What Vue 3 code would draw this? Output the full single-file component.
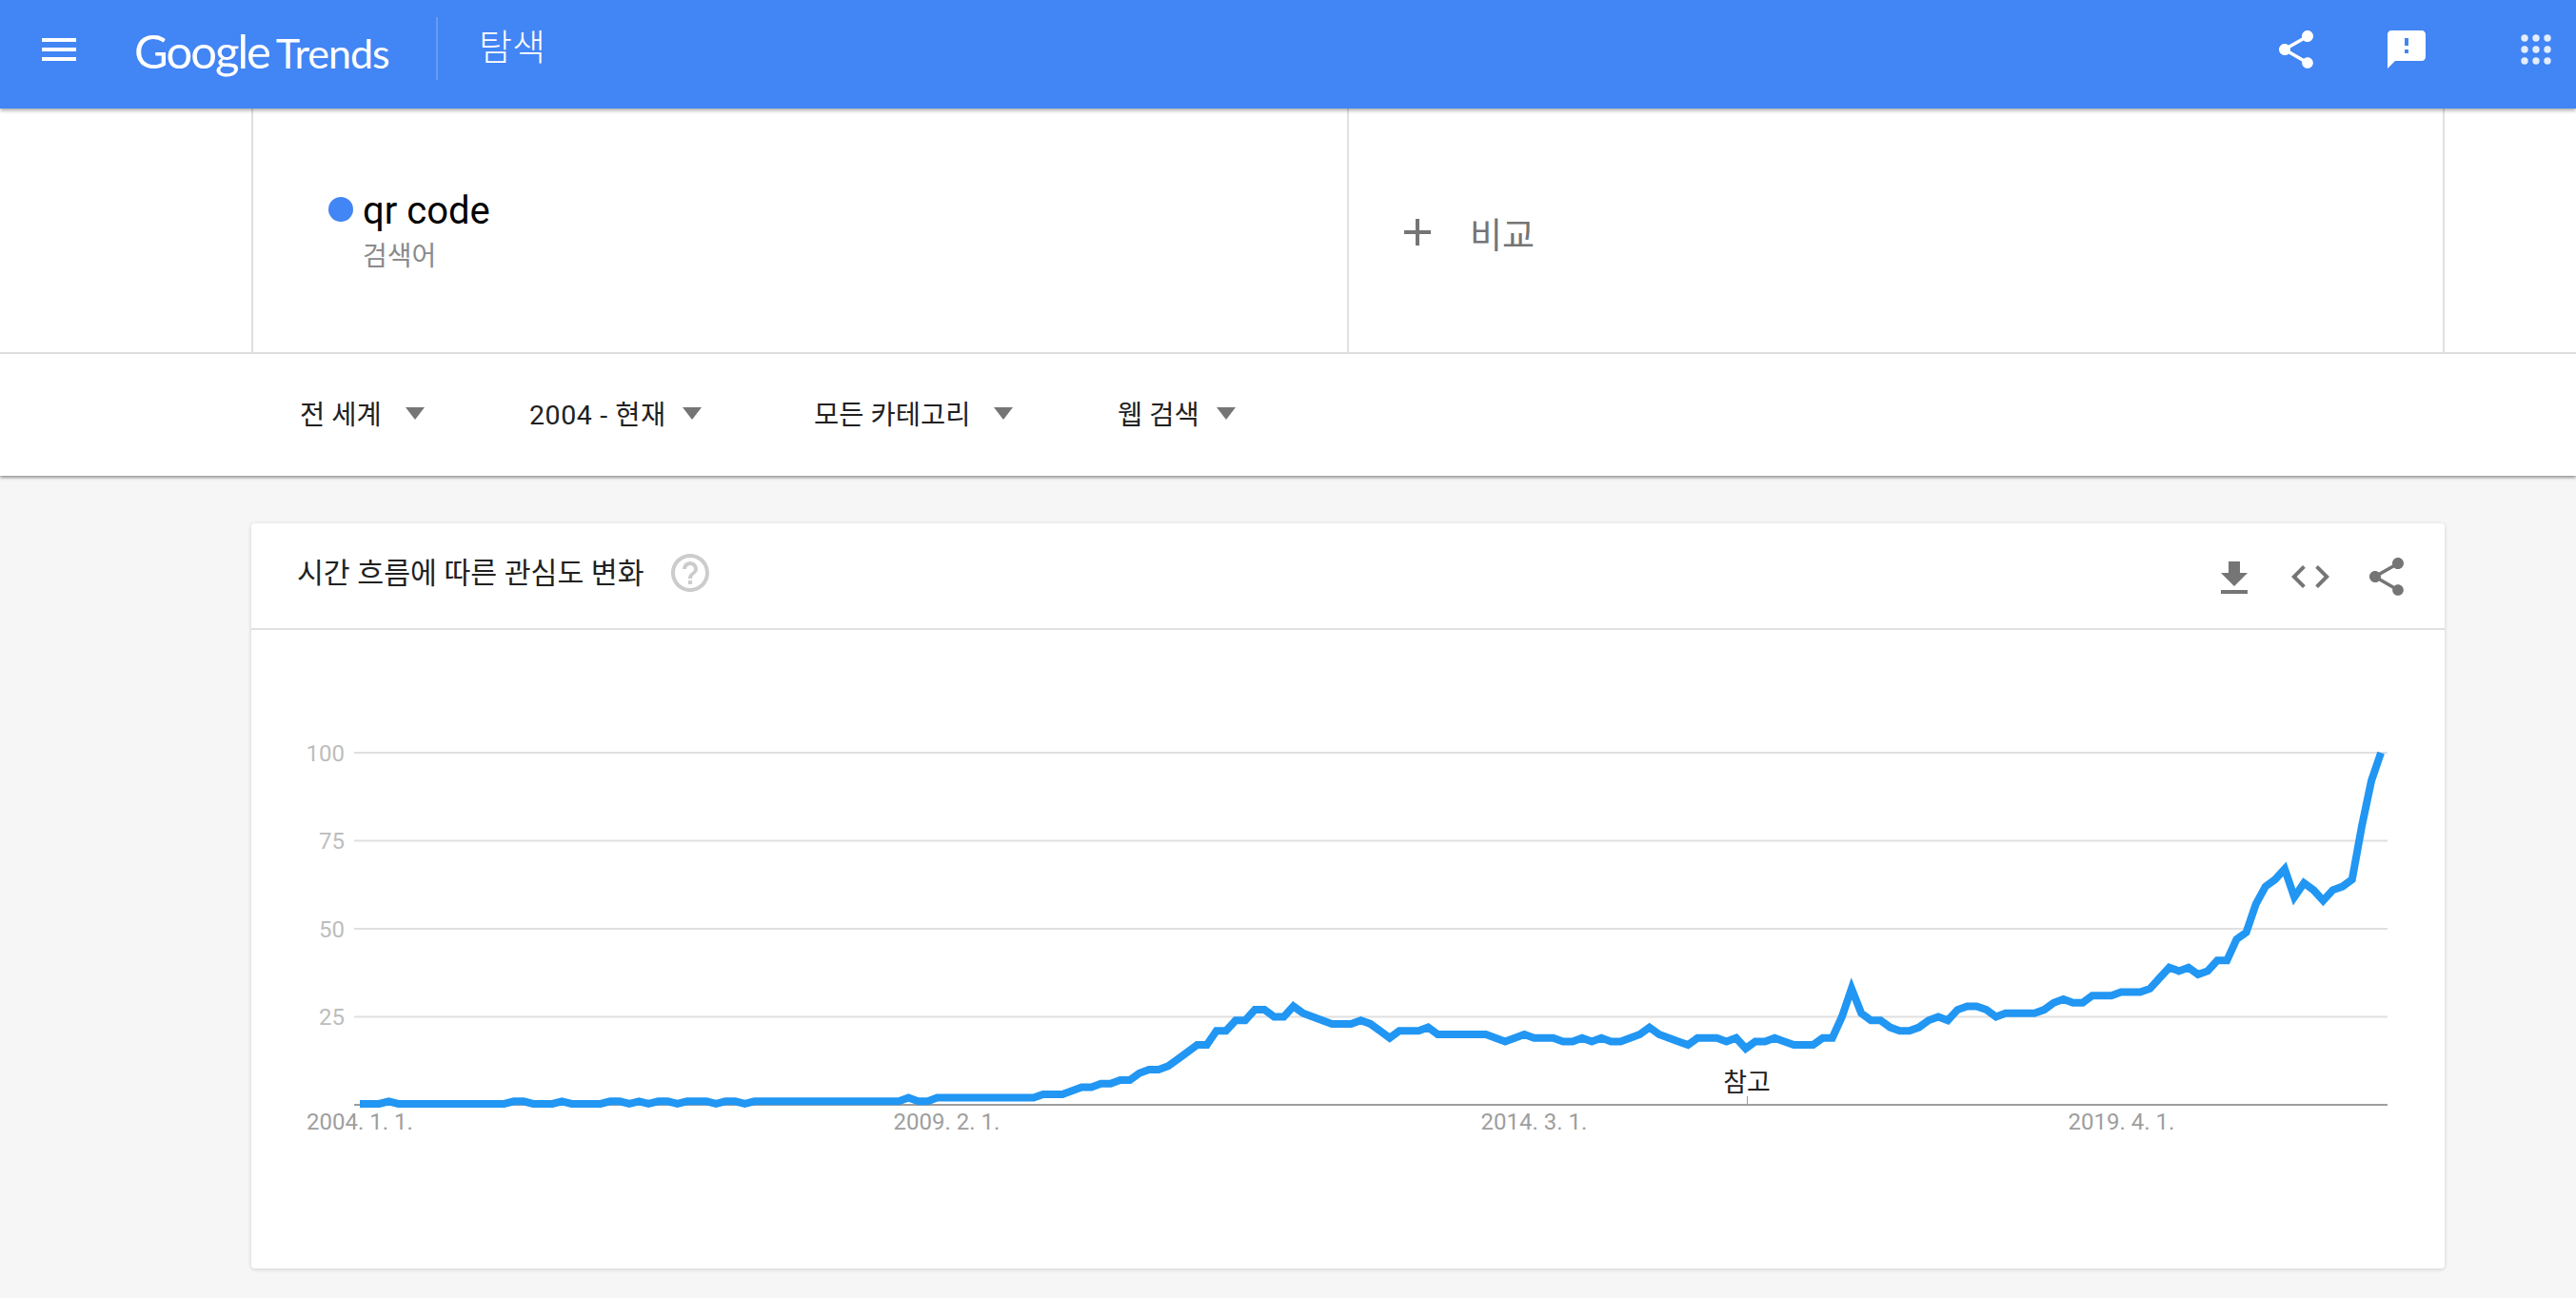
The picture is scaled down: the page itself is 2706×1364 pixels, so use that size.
<script setup>
const filters = ['전 세계', '2004 - 현재', '모든 카테고리', '웹 검색']

const values = [
  0, 0, 0, 1, 0, 0, 0, 0, 0, 0, 0, 0, 0, 0, 0, 0, 1, 1, 0, 0, 0, 1, 0, 0, 0, 0, 1, 1, 0, 1,
  0, 1, 1, 0, 1, 1, 1, 0, 1, 1, 0, 1, 1, 1, 1, 1, 1, 1, 1, 1, 1, 1, 1, 1, 1, 1, 1, 2, 1, 1,
  2, 2, 2, 2, 2, 2, 2, 2, 2, 2, 2, 3, 3, 3, 4, 5, 5, 6, 6, 7, 7, 9, 10, 10, 11, 13, 15, 17, 17, 21,
  21, 24, 24, 27, 27, 25, 25, 28, 26, 25, 24, 23, 23, 23, 24, 23, 21, 19, 21, 21, 21, 22, 20, 20, 20, 20, 20, 20, 19, 18,
  19, 20, 19, 19, 19, 18, 18, 19, 18, 19, 18, 18, 19, 20, 22, 20, 19, 18, 17, 19, 19, 19, 18, 19, 16, 18, 18, 19, 18, 17,
  17, 17, 19, 19, 25, 33, 26, 24, 24, 22, 21, 21, 22, 24, 25, 24, 27, 28, 28, 27, 25, 26, 26, 26, 26, 27, 29, 30, 29, 29,
  31, 31, 31, 32, 32, 32, 33, 36, 39, 38, 39, 37, 38, 41, 41, 47, 49, 57, 62, 64, 67, 59, 63, 61, 58, 61, 62, 64, 79, 92,
  100
]

const baseY = 1161
const toY = (v) => baseY - 3.7 * v
const points = values
  .map((v, i) => `${(378 + i * 10.11).toFixed(1)},${toY(Math.max(v, 0.3)).toFixed(1)}`)
  .join(' ')

const gridLines = [100, 75, 50, 25]
const dates = [
  { label: '2004. 1. 1.', x: 378 },
  { label: '2009. 2. 1.', x: 994.5 },
  { label: '2014. 3. 1.', x: 1611.5 },
  { label: '2019. 4. 1.', x: 2228.5 }
]

const sharePath = 'M18 16.08c-.76 0-1.44.3-1.96.77L8.91 12.7c.05-.23.09-.46.09-.7s-.04-.47-.09-.7l7.05-4.11c.54.5 1.25.81 2.04.81 1.66 0 3-1.34 3-3s-1.34-3-3-3-3 1.34-3 3c0 .24.04.47.09.7L8.04 9.81C7.5 9.31 6.79 9 6 9c-1.66 0-3 1.34-3 3s1.34 3 3 3c.79 0 1.5-.31 2.04-.81l7.12 4.16c-.05.21-.08.43-.08.65 0 1.61 1.31 2.92 2.92 2.92 1.61 0 2.92-1.31 2.92-2.92s-1.31-2.92-2.92-2.92z'
</script>

<template>
  <div class="page">
    <header class="topbar">
      <svg class="icon menu" viewBox="0 0 24 24"><path d="M3 18h18v-2H3v2zm0-5h18v-2H3v2zm0-7v2h18V6H3z" /></svg>
      <div class="logo"><span class="logo-g">Google</span><span class="logo-t">Trends</span></div>
      <div class="divider"></div>
      <div class="page-title">탐색</div>
      <div class="top-actions">
        <svg class="icon" viewBox="0 0 24 24"><path :d="sharePath" /></svg>
        <svg class="icon feedback" viewBox="0 0 24 24"><path d="M20 2H4c-1.1 0-1.99.9-1.99 2L2 22l4-4h14c1.1 0 2-.9 2-2V4c0-1.1-.9-2-2-2zm-7 12h-2v-2h2v2zm0-4h-2V6h2v4z" /></svg>
        <svg class="icon apps" viewBox="0 0 48 48">
          <template v-for="cy in [12, 24, 36]" :key="cy">
            <circle v-for="cx in [12, 24, 36]" :key="cx" :cx="cx" :cy="cy" r="3.7" />
          </template>
        </svg>
      </div>
    </header>

    <section class="terms">
      <div class="terms-inner">
        <div class="term">
          <span class="dot"></span>
          <div>
            <div class="term-name">qr code</div>
            <div class="term-type">검색어</div>
          </div>
        </div>
        <div class="compare">
          <svg class="icon grey" viewBox="0 0 24 24"><path d="M19 13h-6v6h-2v-6H5v-2h6V5h2v6h6v2z" /></svg>
          <span>비교</span>
        </div>
      </div>
    </section>

    <section class="filters">
      <div v-for="f in filters" :key="f" class="filter">
        <span>{{ f }}</span>
        <i class="caret"></i>
      </div>
    </section>

    <main class="content">
      <div class="card">
        <div class="card-head">
          <h2>시간 흐름에 따른 관심도 변화</h2>
          <svg class="icon help" viewBox="0 0 24 24"><path d="M11 18h2v-2h-2v2zm1-16C6.48 2 2 6.48 2 12s4.48 10 10 10 10-4.48 10-10S17.52 2 12 2zm0 18c-4.41 0-8-3.59-8-8s3.59-8 8-8 8 3.59 8 8-3.59 8-8 8zm0-14c-2.21 0-4 1.79-4 4h2c0-1.1.9-2 2-2s2 .9 2 2c0 2-3 1.75-3 5h2c0-2.25 3-2.5 3-5 0-2.21-1.79-4-4-4z" /></svg>
          <div class="card-actions">
            <svg class="icon grey download" viewBox="0 0 24 24"><path d="M19 9h-4V3H9v6H5l7 7 7-7zM5 18v2h14v-2H5z" /></svg>
            <svg class="icon grey" viewBox="0 0 24 24"><path d="M9.4 16.6L4.8 12l4.6-4.6L8 6l-6 6 6 6 1.4-1.4zm5.2 0l4.6-4.6-4.6-4.6L16 6l6 6-6 6-1.4-1.4z" /></svg>
            <svg class="icon grey" viewBox="0 0 24 24"><path :d="sharePath" /></svg>
          </div>
        </div>

        <svg class="chart" viewBox="264 662 2304 671">
          <g v-for="g in gridLines" :key="g">
            <line class="grid" x1="372" x2="2508" :y1="toY(g)" :y2="toY(g)" />
            <text class="y-label" x="362" :y="toY(g) + 8.5">{{ g }}</text>
          </g>
          <line class="axis" x1="372" x2="2508" :y1="baseY" :y2="baseY" />
          <line class="tick" x1="1835.5" x2="1835.5" y1="1152" :y2="baseY" />
          <text class="note" x="1835" y="1147">참고</text>
          <text v-for="d in dates" :key="d.label" class="x-label" :x="d.x" y="1187">{{ d.label }}</text>
          <polyline class="trend" :points="points" />
        </svg>
      </div>
    </main>
  </div>
</template>

<style scoped>
.page {
  width: 2706px;
  height: 1364px;
  overflow: hidden;
  background: #f6f6f6;
  font-family: Roboto, "Noto Sans CJK KR", sans-serif;
  color: #212121;
}

.icon {
  width: 48px;
  height: 48px;
  flex: none;
  fill: #fff;
  display: block;
}

.icon.grey {
  fill: #757575;
}

.topbar {
  position: relative;
  z-index: 2;
  height: 114px;
  background: #4285f4;
  box-shadow: 0 2px 4px rgba(0, 0, 0, 0.35);
  display: flex;
  align-items: center;
  padding-left: 38px;
  padding-right: 18px;
  box-sizing: border-box;
  color: #fff;
}

.menu {
  margin-top: -10px;
}

.logo {
  margin-left: 55px;
  width: 267px;
  display: flex;
  align-items: baseline;
  margin-top: -8px;
  font-family: Lato, sans-serif;
  white-space: nowrap;
}

.logo-g {
  font-size: 49px;
  font-weight: 400;
  letter-spacing: -2px;
}

.logo-t {
  margin-left: 7px;
  font-size: 43px;
  font-weight: 400;
  letter-spacing: -1px;
}

.divider {
  width: 2px;
  height: 66px;
  margin-left: 50px;
  margin-top: -12px;
  background: rgba(255, 255, 255, 0.2);
}

.page-title {
  margin-left: 43px;
  margin-top: -21px;
  font-size: 38px;
  font-weight: 300;
}

.top-actions {
  margin-left: auto;
  margin-top: -10px;
  display: flex;
}

.feedback {
  margin-left: 68px;
}

.apps {
  margin-left: 88px;
  fill: rgba(255, 255, 255, 0.85);
}

.terms {
  height: 256px;
  padding-left: 264px;
  background: #fff;
  border-bottom: 2px solid #e0e0e0;
  display: flex;
}

.terms-inner {
  width: 2304px;
  box-sizing: border-box;
  border-left: 2px solid #e0e0e0;
  border-right: 2px solid #e0e0e0;
  display: grid;
  grid-template-columns: 1149px 1fr;
}

.term {
  display: flex;
  align-items: flex-start;
  padding: 86px 0 0 79px;
}

.dot {
  width: 26px;
  height: 26px;
  margin-top: 7px;
  margin-right: 10px;
  border-radius: 50%;
  background: #4285f4;
}

.term-name {
  font-size: 40px;
  line-height: 44px;
  color: #000;
}

.term-type {
  margin-top: 8px;
  font-size: 28px;
  line-height: 36px;
  color: #8a8a8a;
}

.compare {
  border-left: 2px solid #e0e0e0;
  display: flex;
  align-items: center;
  padding-left: 48px;
  padding-top: 4px;
  font-size: 37px;
  color: #757575;
}

.compare span {
  margin-left: 31px;
  padding-top: 2px;
}

.filters {
  position: relative;
  z-index: 1;
  height: 128px;
  box-sizing: border-box;
  padding-left: 315px;
  padding-bottom: 5px;
  background: #fff;
  box-shadow: 0 2px 3px rgba(0, 0, 0, 0.4);
  display: flex;
  align-items: center;
  font-size: 28.5px;
}

.filter {
  display: flex;
  align-items: center;
  gap: 25px;
  white-space: nowrap;
}

.filter:nth-child(1) {
  width: 241px;
}

.filter:nth-child(2) {
  width: 299px;
  gap: 17px;
  letter-spacing: 0.6px;
}

.filter:nth-child(3) {
  width: 319px;
}

.filter:nth-child(4) {
  gap: 18px;
}

.caret {
  width: 0;
  height: 0;
  margin-top: 2px;
  border-left: 10.5px solid transparent;
  border-right: 10.5px solid transparent;
  border-top: 13px solid #757575;
}

.content {
  padding-top: 50px;
  padding-left: 264px;
  display: flex;
}

.card {
  width: 2304px;
  height: 783px;
  background: #fff;
  border-radius: 4px;
  box-shadow: 0 1px 4px rgba(0, 0, 0, 0.16);
}

.card-head {
  height: 110px;
  border-bottom: 2px solid #e0e0e0;
  display: flex;
  align-items: flex-start;
  padding: 0 37px 0 48px;
}

.card-head h2 {
  margin: 32px 0 0;
  font-size: 30.3px;
  line-height: 42px;
  font-weight: 400;
}

.help {
  margin: 28px 0 0 24px;
  fill: #ccc;
}

.card-actions {
  margin-left: auto;
  margin-top: 32px;
  display: flex;
  gap: 32px;
}

.download {
  margin-top: 2px;
}

.chart {
  display: block;
  width: 2304px;
  height: 671px;
}

.grid {
  stroke: #e0e0e0;
  stroke-width: 2;
}

.axis {
  stroke: #9e9e9e;
  stroke-width: 2;
}

.tick {
  stroke: #9e9e9e;
  stroke-width: 1;
}

.y-label {
  font-size: 24px;
  fill: #bdbdbd;
  text-anchor: end;
}

.x-label {
  font-size: 24px;
  fill: #9e9e9e;
  text-anchor: middle;
}

.note {
  font-size: 27px;
  fill: #212121;
  text-anchor: middle;
}

.trend {
  fill: none;
  stroke: #2196f3;
  stroke-width: 8;
}
</style>

<style>
html,
body {
  margin: 0;
  background: #f6f6f6;
}
</style>
